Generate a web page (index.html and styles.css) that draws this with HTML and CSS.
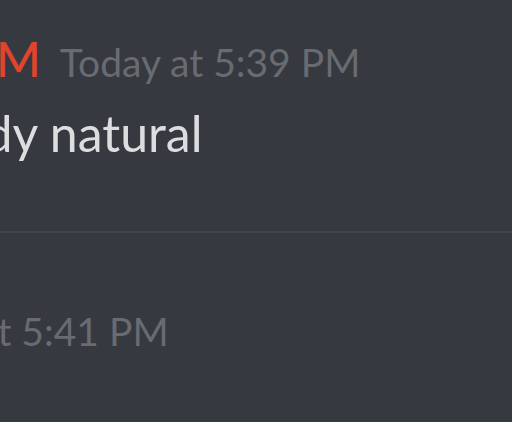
FILE: index.html
```html
<!DOCTYPE html>
<html>
<head>
<meta charset="utf-8">
<link rel="stylesheet" href="styles.css">
</head>
<body>
<div class="chat">
  <div class="group">
    <div class="header">
      <span class="username">M</span>
      <span class="timestamp">Today at 5:39 PM</span>
    </div>
    <div class="content">ready natural</div>
  </div>
  <div class="divider"></div>
  <div class="group second">
    <div class="header">
      <span class="timestamp shifted">Today at 5:41 PM</span>
    </div>
  </div>
</div>
</body>
</html>
```

FILE: styles.css
```css
html, body {
  margin: 0;
  padding: 0;
  background: #36393f;
  overflow: hidden;
  width: 512px;
  height: 422px;
}

.chat {
  font-family: "Lato", "Open Sans", sans-serif;
  display: flex;
  flex-direction: column;
}

.group {
  display: flex;
  flex-direction: column;
}

.header {
  display: flex;
  align-items: baseline;
  height: 100px;
  line-height: 100px;
  padding-top: 9px;
}

.username {
  color: #e0442c;
  font-size: 48px;
  font-weight: 500;
  margin-left: -4px;
  margin-right: 19px;
}

.timestamp {
  color: #686b71;
  font-size: 39px;
  white-space: nowrap;
}

.content {
  color: #dcddde;
  font-size: 50px;
  white-space: nowrap;
  margin-left: -84px;
  margin-top: -6px;
}

.divider {
  height: 2px;
  background: #41444a;
  margin-top: 68px;
}

.second .header {
  padding-top: 48px;
}

.shifted {
  margin-left: -132px;
}
```
